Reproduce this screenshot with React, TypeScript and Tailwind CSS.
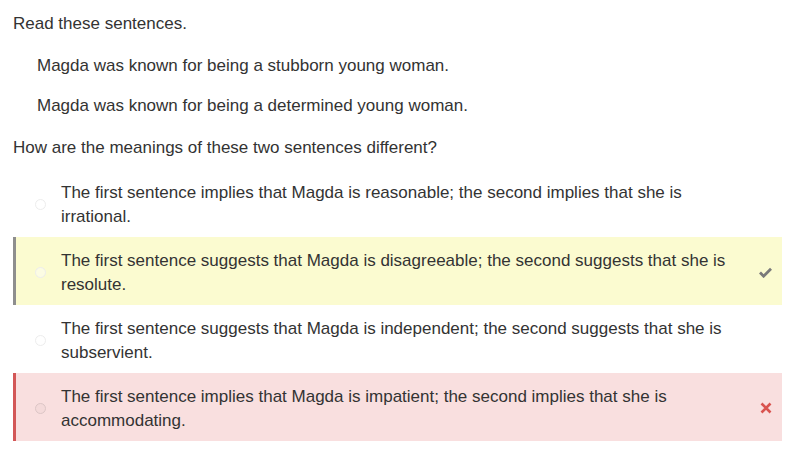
import React from 'react';

type Status = 'none' | 'correct' | 'wrong';

interface Choice {
  text: string;
  status: Status;
}

const choices: Choice[] = [
  {
    text: 'The first sentence implies that Magda is reasonable; the second implies that she is irrational.',
    status: 'none',
  },
  {
    text: 'The first sentence suggests that Magda is disagreeable; the second suggests that she is resolute.',
    status: 'correct',
  },
  {
    text: 'The first sentence suggests that Magda is independent; the second suggests that she is subservient.',
    status: 'none',
  },
  {
    text: 'The first sentence implies that Magda is impatient; the second implies that she is accommodating.',
    status: 'wrong',
  },
];

function CheckIcon() {
  return (
    <svg width="13" height="11" viewBox="0 0 13 11" aria-hidden="true">
      <path d="M1 5.6 L4.6 9.2 L12 1.8" fill="none" stroke="#7a7a7a" strokeWidth="2.8" />
    </svg>
  );
}

function CrossIcon() {
  return (
    <svg width="12" height="12" viewBox="0 0 12 12" aria-hidden="true">
      <path d="M1.5 1.5 L10.5 10.5 M10.5 1.5 L1.5 10.5" fill="none" stroke="#d9534f" strokeWidth="2.6" />
    </svg>
  );
}

function ChoiceRow({ choice }: { choice: Choice }) {
  const rowClass =
    choice.status === 'correct'
      ? 'bg-[#fbfbd0] border-[#8e8e8e]'
      : choice.status === 'wrong'
        ? 'bg-[#f9dfdf] border-[#d35757]'
        : 'bg-white border-transparent';

  return (
    <div className={`flex items-center w-[769px] border-l-[3px] pt-[12px] pb-[8px] ${rowClass}`}>
      {/* Radio */}
      <div className="w-[45px] flex pl-[19px] -mt-[2px]">
        <span
          className={`block w-[11px] h-[11px] rounded-full border ${
            choice.status === 'wrong' ? 'border-[#dcc6c6] bg-[#f4dada]' : 'border-[#ededed] bg-white/40'
          }`}
        />
      </div>
      <p className="w-[680px] leading-6">{choice.text}</p>
      <div className="flex-1 flex justify-end pr-[10px] -mt-[2px]">
        {choice.status === 'correct' && <CheckIcon />}
        {choice.status === 'wrong' && <CrossIcon />}
      </div>
    </div>
  );
}

export default function App() {
  return (
    <div className="w-[790px] h-[457px] bg-white text-[#333333] text-[17px] leading-6 font-['Liberation_Sans',Arial,sans-serif] pt-[12px] pl-[13px]">
      <p className="mb-[18px]">Read these sentences.</p>
      <p className="ml-[24px] mb-[16px]">Magda was known for being a stubborn young woman.</p>
      <p className="ml-[24px] mb-[18px]">Magda was known for being a determined young woman.</p>
      <p className="mb-[9px]">How are the meanings of these two sentences different?</p>
      <div className="flex flex-col">
        {choices.map((c, i) => (
          <ChoiceRow key={i} choice={c} />
        ))}
      </div>
    </div>
  );
}
